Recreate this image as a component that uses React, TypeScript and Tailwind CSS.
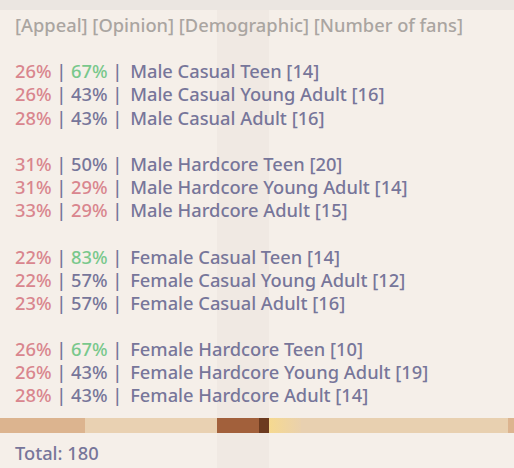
import React from "react";

type Row = { appeal: string; opinion: string; opColor: "red" | "green" | "grey"; label: string };

const groups: Row[][] = [
  [
    { appeal: "26%", opinion: "67%", opColor: "green", label: "Male Casual Teen [14]" },
    { appeal: "26%", opinion: "43%", opColor: "grey", label: "Male Casual Young Adult [16]" },
    { appeal: "28%", opinion: "43%", opColor: "grey", label: "Male Casual Adult [16]" },
  ],
  [
    { appeal: "31%", opinion: "50%", opColor: "grey", label: "Male Hardcore Teen [20]" },
    { appeal: "31%", opinion: "29%", opColor: "red", label: "Male Hardcore Young Adult [14]" },
    { appeal: "33%", opinion: "29%", opColor: "red", label: "Male Hardcore Adult [15]" },
  ],
  [
    { appeal: "22%", opinion: "83%", opColor: "green", label: "Female Casual Teen [14]" },
    { appeal: "22%", opinion: "57%", opColor: "grey", label: "Female Casual Young Adult [12]" },
    { appeal: "23%", opinion: "57%", opColor: "grey", label: "Female Casual Adult [16]" },
  ],
  [
    { appeal: "26%", opinion: "67%", opColor: "green", label: "Female Hardcore Teen [10]" },
    { appeal: "26%", opinion: "43%", opColor: "grey", label: "Female Hardcore Young Adult [19]" },
    { appeal: "28%", opinion: "43%", opColor: "grey", label: "Female Hardcore Adult [14]" },
  ],
];

const opClass = {
  red: "text-[#d9868e]",
  green: "text-[#79c88c]",
  grey: "text-[#77769a]",
};

export default function App() {
  return (
    <div className="relative w-[514px] h-[468px] overflow-hidden bg-[#f5efe9] flex flex-col font-['Noto_Sans',sans-serif] font-medium text-[18.3px] leading-[23.15px] text-[#77769a]">
      {/* faint vertical band from the room behind */}
      <div className="absolute top-0 bottom-0 left-[217px] w-[52px] bg-[#f0e9e3]" />

      <div className="relative h-[10px] bg-[#ebe6e1] shrink-0" />

      <div className="relative pl-[15px] pt-[3px] whitespace-pre">
        <div className="text-[#aaa5a1]">[Appeal] [Opinion] [Demographic] [Number of fans]</div>
        {groups.map((g, gi) => (
          <div key={gi} className="mt-[23.15px]">
            {g.map((r, ri) => (
              <div key={ri}>
                <span className="text-[#d9868e]">{r.appeal}</span>
                <span> | </span>
                <span className={opClass[r.opColor]}>{r.opinion}</span>
                <span> | </span>
                <span className="ml-[3px]">{r.label}</span>
              </div>
            ))}
          </div>
        ))}
      </div>

      {/* floor strip showing through */}
      <div className="relative mt-[11px] h-[15px] flex shrink-0">
        <div className="w-[85px] bg-[#dcb48f]" />
        <div className="w-[132px] bg-[#e9d1b2]" />
        <div className="w-[42px] bg-[#a2603b]" />
        <div className="w-[10px] bg-[#6c3a1f]" />
        <div className="w-[32px] bg-gradient-to-r from-[#f6d98f] to-[#ead1ad]" />
        <div className="flex-1 bg-[#e8d0b0]" />
        <div className="w-[6px] bg-[#dcb48f]" />
      </div>

      <div className="relative pl-[15px] pt-[8px]">Total: 180</div>
    </div>
  );
}
